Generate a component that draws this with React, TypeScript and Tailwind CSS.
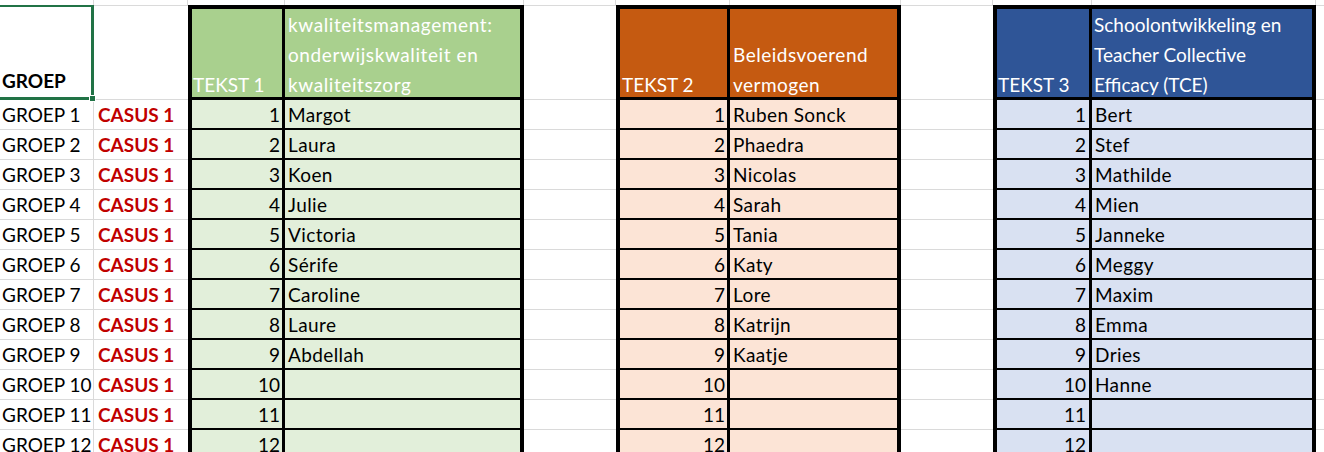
import React from "react";

const names1 = ["Margot", "Laura", "Koen", "Julie", "Victoria", "Sérife", "Caroline", "Laure", "Abdellah", "", "", ""];
const names2 = ["Ruben Sonck", "Phaedra", "Nicolas", "Sarah", "Tania", "Katy", "Lore", "Katrijn", "Kaatje", "", "", ""];
const names3 = ["Bert", "Stef", "Mathilde", "Mien", "Janneke", "Meggy", "Maxim", "Emma", "Dries", "Hanne", "", ""];

const TopRow = () => (
  <div className="flex h-[5px]">
    <div className="w-[94px] shrink-0 border-r border-[#dadada]" />
    <div className="w-[94px] shrink-0 border-r border-[#dadada]" />
    <div className="w-[97px] shrink-0 border-r border-[#dadada]" />
    <div className="w-[239px] shrink-0 border-r border-[#dadada]" />
    <div className="w-[92px] shrink-0 border-r border-[#dadada]" />
    <div className="w-[114px] shrink-0 border-r border-[#dadada]" />
    <div className="w-[171px] shrink-0 border-r border-[#dadada]" />
    <div className="w-[92px] shrink-0 border-r border-[#dadada]" />
    <div className="w-[99px] shrink-0 border-r border-[#dadada]" />
    <div className="w-[224px] shrink-0 border-r border-[#dadada]" />
    <div className="flex-1" />
  </div>
);

const HeaderRow = () => (
  <div className="flex h-[95px] text-white">
    <div className="relative w-[94px] shrink-0 border-y border-r border-[#dadada] flex items-end pl-[2px] pb-[4px] font-bold text-black">
      GROEP
      <div className="absolute left-[-3px] top-[-1px] w-[97px] h-[95px] border-t-2 border-r-[3px] border-b-[3px] border-[#217346] z-10">
        <div className="absolute right-[-5px] bottom-[-5px] w-[7px] h-[7px] bg-[#217346] border border-white" />
      </div>
    </div>
    <div className="w-[94px] shrink-0 border-y border-[#dadada]" />

    <div className="w-[97px] shrink-0 border-l-4 border-t-4 border-r-[3px] border-b-[3px] border-black bg-[#a9d08e] flex items-end pl-[1px]">
      <span className="mb-[-3px] leading-[30px]">TEKST 1</span>
    </div>
    <div className="w-[239px] shrink-0 border-t-4 border-r-4 border-b-[3px] border-black bg-[#a9d08e] flex items-end pl-[3px]">
      <span className="mb-[-3px] leading-[30px] whitespace-nowrap tracking-[0.6px]">
        kwaliteitsmanagement:
        <br />
        onderwijskwaliteit en
        <br />
        kwaliteitszorg
      </span>
    </div>

    <div className="w-[92px] shrink-0 border-y border-[#dadada]" />

    <div className="w-[114px] shrink-0 border-l-4 border-t-4 border-r-[3px] border-b-[3px] border-black bg-[#c55a11] flex items-end pl-[2px]">
      <span className="mb-[-3px] leading-[30px]">TEKST 2</span>
    </div>
    <div className="w-[171px] shrink-0 border-t-4 border-r-4 border-b-[3px] border-black bg-[#c55a11] flex items-end pl-[3px]">
      <span className="mb-[-3px] leading-[30px] whitespace-nowrap tracking-[0.5px]">
        Beleidsvoerend
        <br />
        vermogen
      </span>
    </div>

    <div className="w-[92px] shrink-0 border-y border-[#dadada]" />

    <div className="w-[99px] shrink-0 border-l-4 border-t-4 border-r-[3px] border-b-[3px] border-black bg-[#2f5597] flex items-end pl-[1px]">
      <span className="mb-[-3px] leading-[30px]">TEKST 3</span>
    </div>
    <div className="w-[224px] shrink-0 border-t-4 border-r-4 border-b-[3px] border-black bg-[#2f5597] flex items-end pl-[2px]">
      <span className="mb-[-3px] leading-[30px] whitespace-nowrap">
        Schoolontwikkeling en
        <br />
        Teacher Collective
        <br />
        Efficacy (TCE)
      </span>
    </div>

    <div className="flex-1 border-y border-[#dadada]" />
  </div>
);

const DataRow = ({ n }: { n: number }) => {
  const i = n - 1;
  return (
    <div className="flex h-[30px] leading-[22px]">
      <div className="w-[94px] shrink-0 border-r border-b border-[#dadada] flex items-end pl-[2px] pb-[3px] whitespace-nowrap">
        GROEP {n}
      </div>
      <div className="w-[94px] shrink-0 border-b border-[#dadada] flex items-end pl-[4px] pb-[3px] font-bold text-[#c00000] whitespace-nowrap">
        CASUS 1
      </div>

      <div className="w-[97px] shrink-0 border-l-4 border-r-[3px] border-b-2 border-black bg-[#e2efda] flex items-end justify-end pr-[2px] pb-[2px]">
        {n}
      </div>
      <div className="w-[239px] shrink-0 border-r-4 border-b-2 border-black bg-[#e2efda] flex items-end pl-[3px] pb-[2px] tracking-[0.4px]">
        {names1[i]}
      </div>

      <div className="w-[92px] shrink-0 border-b border-[#dadada]" />

      <div className="w-[114px] shrink-0 border-l-4 border-r-[3px] border-b-2 border-black bg-[#fce4d6] flex items-end justify-end pr-[2px] pb-[2px]">
        {n}
      </div>
      <div className="w-[171px] shrink-0 border-r-4 border-b-2 border-black bg-[#fce4d6] flex items-end pl-[3px] pb-[2px] tracking-[0.4px]">
        {names2[i]}
      </div>

      <div className="w-[92px] shrink-0 border-b border-[#dadada]" />

      <div className="w-[99px] shrink-0 border-l-4 border-r-[3px] border-b-2 border-black bg-[#d9e1f2] flex items-end justify-end pr-[3px] pb-[2px]">
        {n}
      </div>
      <div className="w-[224px] shrink-0 border-r-4 border-b-2 border-black bg-[#d9e1f2] flex items-end pl-[3px] pb-[2px] tracking-[0.4px]">
        {names3[i]}
      </div>

      <div className="flex-1 border-b border-[#dadada]" />
    </div>
  );
};

export default function App() {
  return (
    <div className="w-[1324px] h-[452px] overflow-hidden bg-white text-black font-['Lato',sans-serif] text-[19px]">
      <TopRow />
      <HeaderRow />
      {Array.from({ length: 12 }, (_, k) => (
        <DataRow key={k} n={k + 1} />
      ))}
    </div>
  );
}
